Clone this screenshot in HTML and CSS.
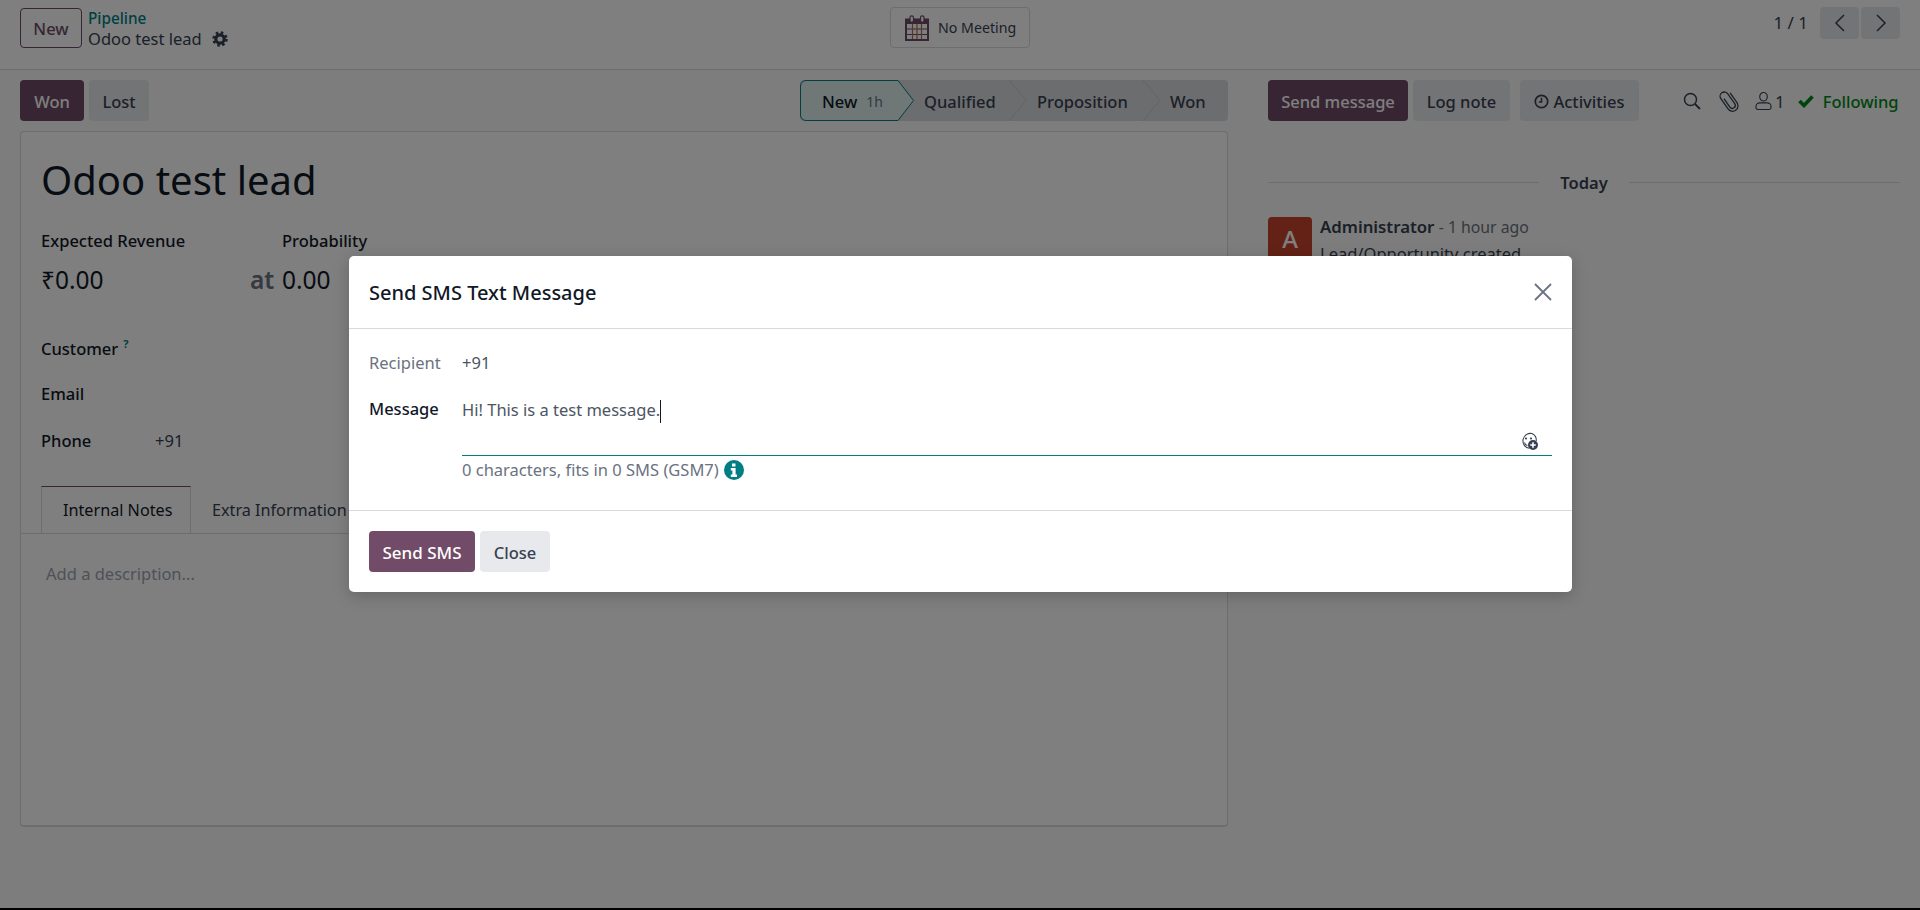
FILE: index.html
```html
<!DOCTYPE html>
<html lang="en">
<head>
    <meta charset="UTF-8">
    <meta name="viewport" content="width=device-width, initial-scale=1.0">
    <title>Odoo test lead</title>
    <link rel="stylesheet" href="styles.css">
</head>
<body>
<div class="app">
    <header class="topbar">
        <div class="topbar-left">
            <button class="btn btn-outline">New</button>
            <div class="crumbs">
                <a class="crumb-link">Pipeline</a>
                <div class="crumb-current">Odoo test lead
                    <svg class="gear" viewBox="0 0 16 16"><circle cx="8" cy="8" r="4.2" fill="none" stroke="#374151" stroke-width="3.2"/><circle cx="8" cy="8" r="6.4" fill="none" stroke="#374151" stroke-width="2.6" stroke-dasharray="2.5 2.53"/></svg>
                </div>
            </div>
        </div>
        <button class="meeting">
            <svg class="cal" viewBox="0 0 24 26">
                <path d="M1 4.500h22v20.500H1Z" fill="#fff" stroke="#714b67" stroke-width="2"/>
                <rect x="1" y="4" width="22" height="5" fill="#714b67"/>
                <path d="M2 14h20M2 19.500h20" stroke="#714b67" stroke-width="1.200" fill="none"/>
                <path d="M7.500 9v15M12 9v15M16.500 9v15" stroke="#a8704f" stroke-width="1.200" fill="none"/>
                <rect x="5" y="0.800" width="3.500" height="6.500" rx="1.700" fill="#fff" stroke="#714b67" stroke-width="1.200"/>
                <rect x="15.500" y="0.800" width="3.500" height="6.500" rx="1.700" fill="#fff" stroke="#714b67" stroke-width="1.200"/>
            </svg>
            No Meeting
        </button>
        <div class="pager">
            <span class="pager-count">1 / 1</span>
            <div class="pager-btns">
                <button class="pager-btn"><svg viewBox="0 0 12 20"><path d="M10 2 2 10l8 8" fill="none" stroke="#374151" stroke-width="1.5"/></svg></button>
                <button class="pager-btn"><svg viewBox="0 0 12 20"><path d="m2 2 8 8-8 8" fill="none" stroke="#374151" stroke-width="1.5"/></svg></button>
            </div>
        </div>
    </header>

    <div class="content">
        <main class="form-col">
            <div class="form-actions">
                <div class="action-btns">
                    <button class="btn btn-primary btn-won">Won</button>
                    <button class="btn btn-secondary btn-lost">Lost</button>
                </div>
                <div class="status">
                    <div class="step step-current">
                        <svg class="step-shape" viewBox="0 0 114 41"><path d="M6 .5H98L113.500 20.500 98 40.500H6A5.500 5.500 0 0 1 .5 35V6A5.500 5.500 0 0 1 6 .5Z" fill="#deF0EF" stroke="#017e84"/></svg>
                        <span class="step-label">New</span><span class="step-time">1h</span>
                    </div>
                    <div class="step step-qualified">Qualified<svg class="step-arrow" viewBox="0 0 17 41"><path d="M0 0 17 20.500 0 41" fill="none" stroke="#c4c8cc"/></svg></div>
                    <div class="step step-proposition">Proposition<svg class="step-arrow" viewBox="0 0 17 41"><path d="M0 0 17 20.500 0 41" fill="none" stroke="#c4c8cc"/></svg></div>
                    <div class="step step-won">Won</div>
                </div>
            </div>

            <section class="sheet">
                <h1 class="lead-title">Odoo test lead</h1>
                <div class="money-row">
                    <div class="money-col money-revenue">
                        <label class="strong">Expected Revenue</label>
                        <div class="big">₹0.00</div>
                    </div>
                    <span class="big at">at</span>
                    <div class="money-col">
                        <label class="strong">Probability</label>
                        <div class="big">0.00</div>
                    </div>
                </div>
                <div class="fields">
                    <div class="field"><label class="strong">Customer<sup class="help">?</sup></label></div>
                    <div class="field"><label class="strong">Email</label></div>
                    <div class="field"><label class="strong">Phone</label><span>+91</span></div>
                </div>
                <div class="tabs">
                    <div class="tab tab-active">Internal Notes</div>
                    <div class="tab">Extra Information</div>
                </div>
                <div class="notes">Add a description...</div>
            </section>
        </main>

        <aside class="chatter">
            <div class="chatter-bar">
                <button class="btn btn-primary btn-send">Send message</button>
                <button class="btn btn-secondary btn-log">Log note</button>
                <button class="btn btn-secondary btn-activities">
                    <svg class="clock" viewBox="0 0 14 14"><circle cx="7" cy="7" r="5.800" fill="none" stroke="#374151" stroke-width="1.600"/><path d="M7 3.500V7.500H4.500" fill="none" stroke="#374151" stroke-width="1.400"/></svg>
                    Activities
                </button>
                <div class="chatter-tools">
                    <svg class="tool tool-search" viewBox="0 0 18 18"><circle cx="7.500" cy="7.500" r="6" fill="none" stroke="#374151" stroke-width="1.500"/><path d="m12 12 5 5" stroke="#374151" stroke-width="1.800"/></svg>
                    <svg class="tool tool-clip" viewBox="0 0 20 22"><path d="M7.500 6.500V16a2.700 2.700 0 0 0 5.400 0V5a3.900 3.900 0 0 0-7.800 0v11.500a5 5 0 0 0 10 0V5.500" fill="none" stroke="#374151" stroke-width="1.200" transform="rotate(-35 10 11)"/></svg>
                    <span class="followers">
                        <svg class="tool-user" viewBox="0 0 18 20"><path d="M5 5.500a4 4.500 0 1 1 8 0 4 4.500 0 1 1-8 0ZM1 16a4 4 0 0 1 4-4h8a4 4 0 0 1 4 4v1a2 2 0 0 1-2 2H3a2 2 0 0 1-2-2Z" fill="none" stroke="#374151" stroke-width="1.200"/></svg>1
                    </span>
                    <span class="following">
                        <svg class="check" viewBox="0 0 16 14"><path d="M1.500 7 6 11.500 14.500 2.500" fill="none" stroke="#008818" stroke-width="3.600"/></svg>Following
                    </span>
                </div>
            </div>
            <div class="today"><span class="today-label">Today</span></div>
            <div class="message">
                <div class="avatar">A</div>
                <div class="msg-body">
                    <div><strong class="msg-author">Administrator</strong> <span class="msg-time">- 1 hour ago</span></div>
                    <div class="msg-text">Lead/Opportunity created</div>
                </div>
            </div>
        </aside>
    </div>
</div>

<div class="backdrop"></div>

<div class="dialog">
    <div class="dialog-head">
        <h4 class="dialog-title">Send SMS Text Message</h4>
        <svg class="dialog-close" viewBox="0 0 18 18"><path d="m1 1 16 16M17 1 1 17" stroke="#6b7280" stroke-width="1.800" fill="none"/></svg>
    </div>
    <div class="dialog-body">
        <div class="sms-row">
            <label class="sms-label muted">Recipient</label>
            <div class="sms-value">+91</div>
        </div>
        <div class="sms-row">
            <label class="sms-label strong">Message</label>
            <div class="sms-field">
                <div class="sms-input">
                    <span class="sms-text">Hi! This is a test message.</span><span class="caret"></span>
                    <svg class="emoji" viewBox="0 0 18 18">
                        <path d="M12 1.500A7.500 7.500 0 1 0 9 16.300" fill="none" stroke="#374151" stroke-width="1.100"/>
                        <path d="M16.300 9A7.500 7.500 0 0 0 12 1.500" fill="none" stroke="#374151" stroke-width="1.100"/>
                        <circle cx="6" cy="6.500" r="1.100" fill="#374151"/><circle cx="11" cy="6.500" r="1.100" fill="#374151"/>
                        <path d="M4.500 10.500Q5 13 7.500 13.500" fill="none" stroke="#374151" stroke-width="1.100"/>
                        <circle cx="13" cy="13" r="5" fill="#374151"/>
                        <path d="M13 10.200v5.600M10.200 13h5.600" stroke="#fff" stroke-width="1.600"/>
                    </svg>
                </div>
                <div class="sms-count">0 characters, fits in 0 SMS (GSM7)
                    <svg class="info" viewBox="0 0 20 20"><circle cx="10" cy="10" r="10" fill="#017e84"/><path d="M8 3.500h3.500v3H8ZM6.800 8h4.800v6.500H13V17H6.800v-2.500h1.600v-4H6.800Z" fill="#fff"/></svg>
                </div>
            </div>
        </div>
    </div>
    <div class="dialog-foot">
        <button class="btn btn-primary btn-sms">Send SMS</button>
        <button class="btn btn-secondary btn-close">Close</button>
    </div>
</div>
</body>
</html>
```

FILE: styles.css
```css
* {
    box-sizing: border-box;
}

body {
    margin: 0;
    height: 910px;
    overflow: hidden;
    background: #000;
    font-family: "Noto Sans", sans-serif;
    font-size: 16.500px;
    color: #374151;
}

.app {
    height: 908px;
    background: #f9fbf9;
}

button {
    font-family: inherit;
}

/* top bar */
.topbar {
    height: 70px;
    padding: 0 20px;
    display: grid;
    grid-template-columns: 1fr auto 1fr;
    background: #fff;
    border-bottom: 1px solid #d8dadd;
}

.topbar-left {
    display: flex;
    align-items: flex-start;
    gap: 6px;
    padding-top: 8px;
}

.crumbs {
    line-height: 20px;
}

.crumb-link {
    display: block;
    font-size: 15.300px;
    font-weight: 500;
    line-height: 18px;
    margin-top: 1px;
    color: #017e84;
}

.crumb-current {
    display: flex;
    align-items: center;
    gap: 10px;
    margin-top: 1px;
    font-size: 16.500px;
    line-height: 22px;
}

.gear {
    width: 16px;
    height: 16px;
}

.btn {
    height: 41px;
    padding: 1px 0 0;
    border: none;
    border-radius: 4px;
    font-size: 16.500px;
    font-weight: 500;
}

.btn-outline {
    width: 62px;
    height: 40px;
    background: #fff;
    border: 1px solid #714b67;
    color: #714b67;
}

.btn-primary {
    background: #714b67;
    color: #fff;
}

.btn-secondary {
    background: #e7e9ed;
    color: #374151;
}

.meeting {
    width: 140px;
    height: 41px;
    margin-top: 7px;
    padding: 0 0 0 14px;
    display: flex;
    align-items: center;
    gap: 9px;
    background: #fff;
    border: 1px solid #d8dadd;
    border-radius: 4px;
    font-size: 14.200px;
    color: #374151;
}

.cal {
    width: 24px;
    height: 26px;
}

.pager {
    justify-self: end;
    display: flex;
    align-items: flex-start;
    gap: 12px;
    padding-top: 7px;
}

.pager-count {
    font-size: 17px;
    line-height: 32px;
}

.pager-btns {
    display: flex;
    gap: 2px;
}

.pager-btn {
    width: 39px;
    height: 32px;
    padding: 0;
    border: none;
    border-radius: 4px;
    background: #e7e9ed;
    display: flex;
    align-items: center;
    justify-content: center;
}

.pager-btn svg {
    width: 12px;
    height: 20px;
}

/* main layout */
.content {
    display: flex;
    padding: 10px 20px 0;
    gap: 40px;
}

.form-col {
    width: 1208px;
}

.form-actions {
    display: flex;
    justify-content: space-between;
    height: 41px;
    margin-bottom: 10px;
}

.action-btns {
    display: flex;
    gap: 5px;
}

.btn-won {
    width: 64px;
}

.btn-lost {
    width: 60px;
}

/* status bar */
.status {
    display: flex;
    width: 428px;
    height: 41px;
    background: #d8dadd;
    border-radius: 4px;
}

.step {
    position: relative;
    display: flex;
    align-items: center;
    padding: 1px 0 0 27px;
    font-weight: 500;
}

.step-current {
    width: 98px;
    padding-left: 22px;
    color: #111827;
}

.step-shape {
    position: absolute;
    left: 0;
    top: 0;
    width: 114px;
    height: 41px;
}

.step-label,
.step-time {
    position: relative;
}

.step-time {
    margin-left: 9px;
    font-size: 14px;
    font-weight: 400;
    color: #6b7280;
}

.step-qualified {
    width: 111px;
    padding-left: 26px;
}

.step-proposition {
    width: 134px;
    padding-left: 28px;
}

.step-won {
    width: 85px;
}

.step-arrow {
    position: absolute;
    right: -17px;
    top: 0;
    width: 17px;
    height: 41px;
}

/* form sheet */
.sheet {
    height: 696px;
    background: #fff;
    border: 1px solid #d8dadd;
    border-bottom-width: 2px;
    border-radius: 4px;
    padding: 20px 0 0;
}

.lead-title {
    margin: 0 0 0 20px;
    font-size: 40px;
    font-weight: 400;
    line-height: 56px;
    color: #111827;
}

.money-row {
    display: flex;
    margin: 21px 0 0 20px;
}

.money-col {
    display: flex;
    flex-direction: column;
    gap: 13px;
}

.money-revenue {
    width: 210px;
}

.strong {
    font-weight: 500;
    color: #111827;
}

.big {
    font-size: 24.500px;
    line-height: 30px;
    color: #111827;
}

.at {
    width: 32px;
    margin-left: -1px;
    align-self: flex-end;
    color: #6b7280;
    font-weight: 600;
}

.fields {
    margin: 29px 0 0 20px;
}

.field {
    display: flex;
    align-items: center;
    height: 46.500px;
}

.field label {
    width: 114px;
}

.help {
    margin-left: 5px;
    font-size: 11px;
    font-weight: 700;
    color: #017e84;
}

.tabs {
    display: flex;
    height: 48px;
    margin-top: 22px;
    padding-left: 20px;
    border-bottom: 1px solid #d8dadd;
    font-size: 16.200px;
}

.tab {
    padding: 0 21px;
    height: 48px;
    line-height: 48px;
    border-right: 1px solid transparent;
    white-space: nowrap;
}

.tab-active {
    width: 150px;
    background: #fff;
    border: 1px solid #d8dadd;
    border-top-color: #714b67;
    border-bottom-color: #d8dadd;
    color: #111827;
    line-height: 47px;
}

.notes {
    padding: 28px 25px;
    color: #9ca3af;
}

/* chatter */
.chatter {
    width: 632px;
}

.chatter-bar {
    display: flex;
    height: 41px;
    align-items: center;
}

.btn-send {
    width: 140px;
}

.btn-log {
    width: 97px;
    margin-left: 5px;
}

.btn-activities {
    width: 119px;
    margin-left: 10px;
    display: flex;
    align-items: center;
    justify-content: center;
    gap: 4px;
}

.clock {
    width: 15px;
    height: 15px;
}

.chatter-tools {
    display: flex;
    align-items: center;
    margin-left: 44px;
    padding-top: 1px;
}

.tool-search {
    width: 18px;
    height: 18px;
}

.tool-clip {
    width: 22px;
    height: 24px;
    margin-left: 17px;
}

.followers {
    display: flex;
    align-items: center;
    gap: 3px;
    margin-left: 15px;
    font-size: 17px;
}

.tool-user {
    width: 17px;
    height: 20px;
}

.following {
    display: flex;
    align-items: center;
    gap: 9px;
    margin-left: 13px;
    font-weight: 500;
    color: #008818;
}

.check {
    width: 16px;
    height: 14px;
}

.today {
    display: flex;
    align-items: center;
    gap: 21px;
    margin-top: 50px;
    font-weight: 600;
}

.today::before,
.today::after {
    content: "";
    flex: 1;
    height: 1px;
    background: #d8dadd;
}

.message {
    display: flex;
    gap: 8px;
    margin-top: 23px;
}

.avatar {
    width: 44px;
    height: 44px;
    border-radius: 4px;
    background: #c8452c;
    color: #fff;
    font-size: 24px;
    font-weight: 500;
    text-align: center;
    line-height: 44px;
}

.msg-author {
    font-size: 16.800px;
    font-weight: 600;
}

.msg-time {
    font-size: 15.800px;
    color: #6b7280;
}

.msg-body {
    margin-top: -1px;
    line-height: 22px;
}

.msg-text {
    margin-top: 5px;
}

/* overlay and dialog */
.backdrop {
    position: absolute;
    left: 0;
    top: 0;
    width: 100%;
    height: 908px;
    background: rgba(0, 0, 0, .5);
}

.dialog {
    position: absolute;
    left: 349px;
    top: 256px;
    width: 1223px;
    height: 336px;
    background: #fff;
    border-radius: 5px;
    box-shadow: 0 4px 16px rgba(0, 0, 0, .2);
    display: flex;
    flex-direction: column;
}

.dialog-head {
    display: flex;
    align-items: center;
    justify-content: space-between;
    height: 74px;
    padding: 0 20px;
    border-bottom: 1px solid #d8dadd;
}

.dialog-title {
    margin: 0;
    font-size: 20px;
    font-weight: 500;
    color: #111827;
}

.dialog-close {
    width: 18px;
    height: 18px;
}

.dialog-body {
    height: 183px;
    padding: 22px 20px 0;
    border-bottom: 1px solid #d8dadd;
}

.sms-row {
    display: flex;
}

.sms-label {
    width: 93px;
    line-height: 24px;
    white-space: nowrap;
}

.muted {
    color: #6b7280;
}

.sms-value {
    line-height: 24px;
    color: #4b5563;
}

.sms-field {
    flex: 1;
    margin-top: 22px;
}

.sms-row:last-child .sms-label {
    margin-top: 22px;
}

.sms-input {
    position: relative;
    height: 59px;
    padding-top: 1px;
    line-height: 24px;
    color: #4b5563;
    border-bottom: 1px solid #017e84;
}

.caret {
    display: inline-block;
    width: 1px;
    height: 23px;
    vertical-align: middle;
    background: #111827;
}

.emoji {
    position: absolute;
    right: 14px;
    bottom: 5px;
    width: 18px;
    height: 18px;
}

.sms-count {
    display: flex;
    align-items: center;
    gap: 5px;
    margin-top: 3px;
    line-height: 22px;
    color: #6b7280;
}

.info {
    width: 20px;
    height: 20px;
}

.dialog-foot {
    display: flex;
    gap: 5px;
    padding: 20px 20px;
}

.btn-sms {
    width: 106px;
    font-size: 17px;
}

.btn-close {
    width: 70px;
}
```
